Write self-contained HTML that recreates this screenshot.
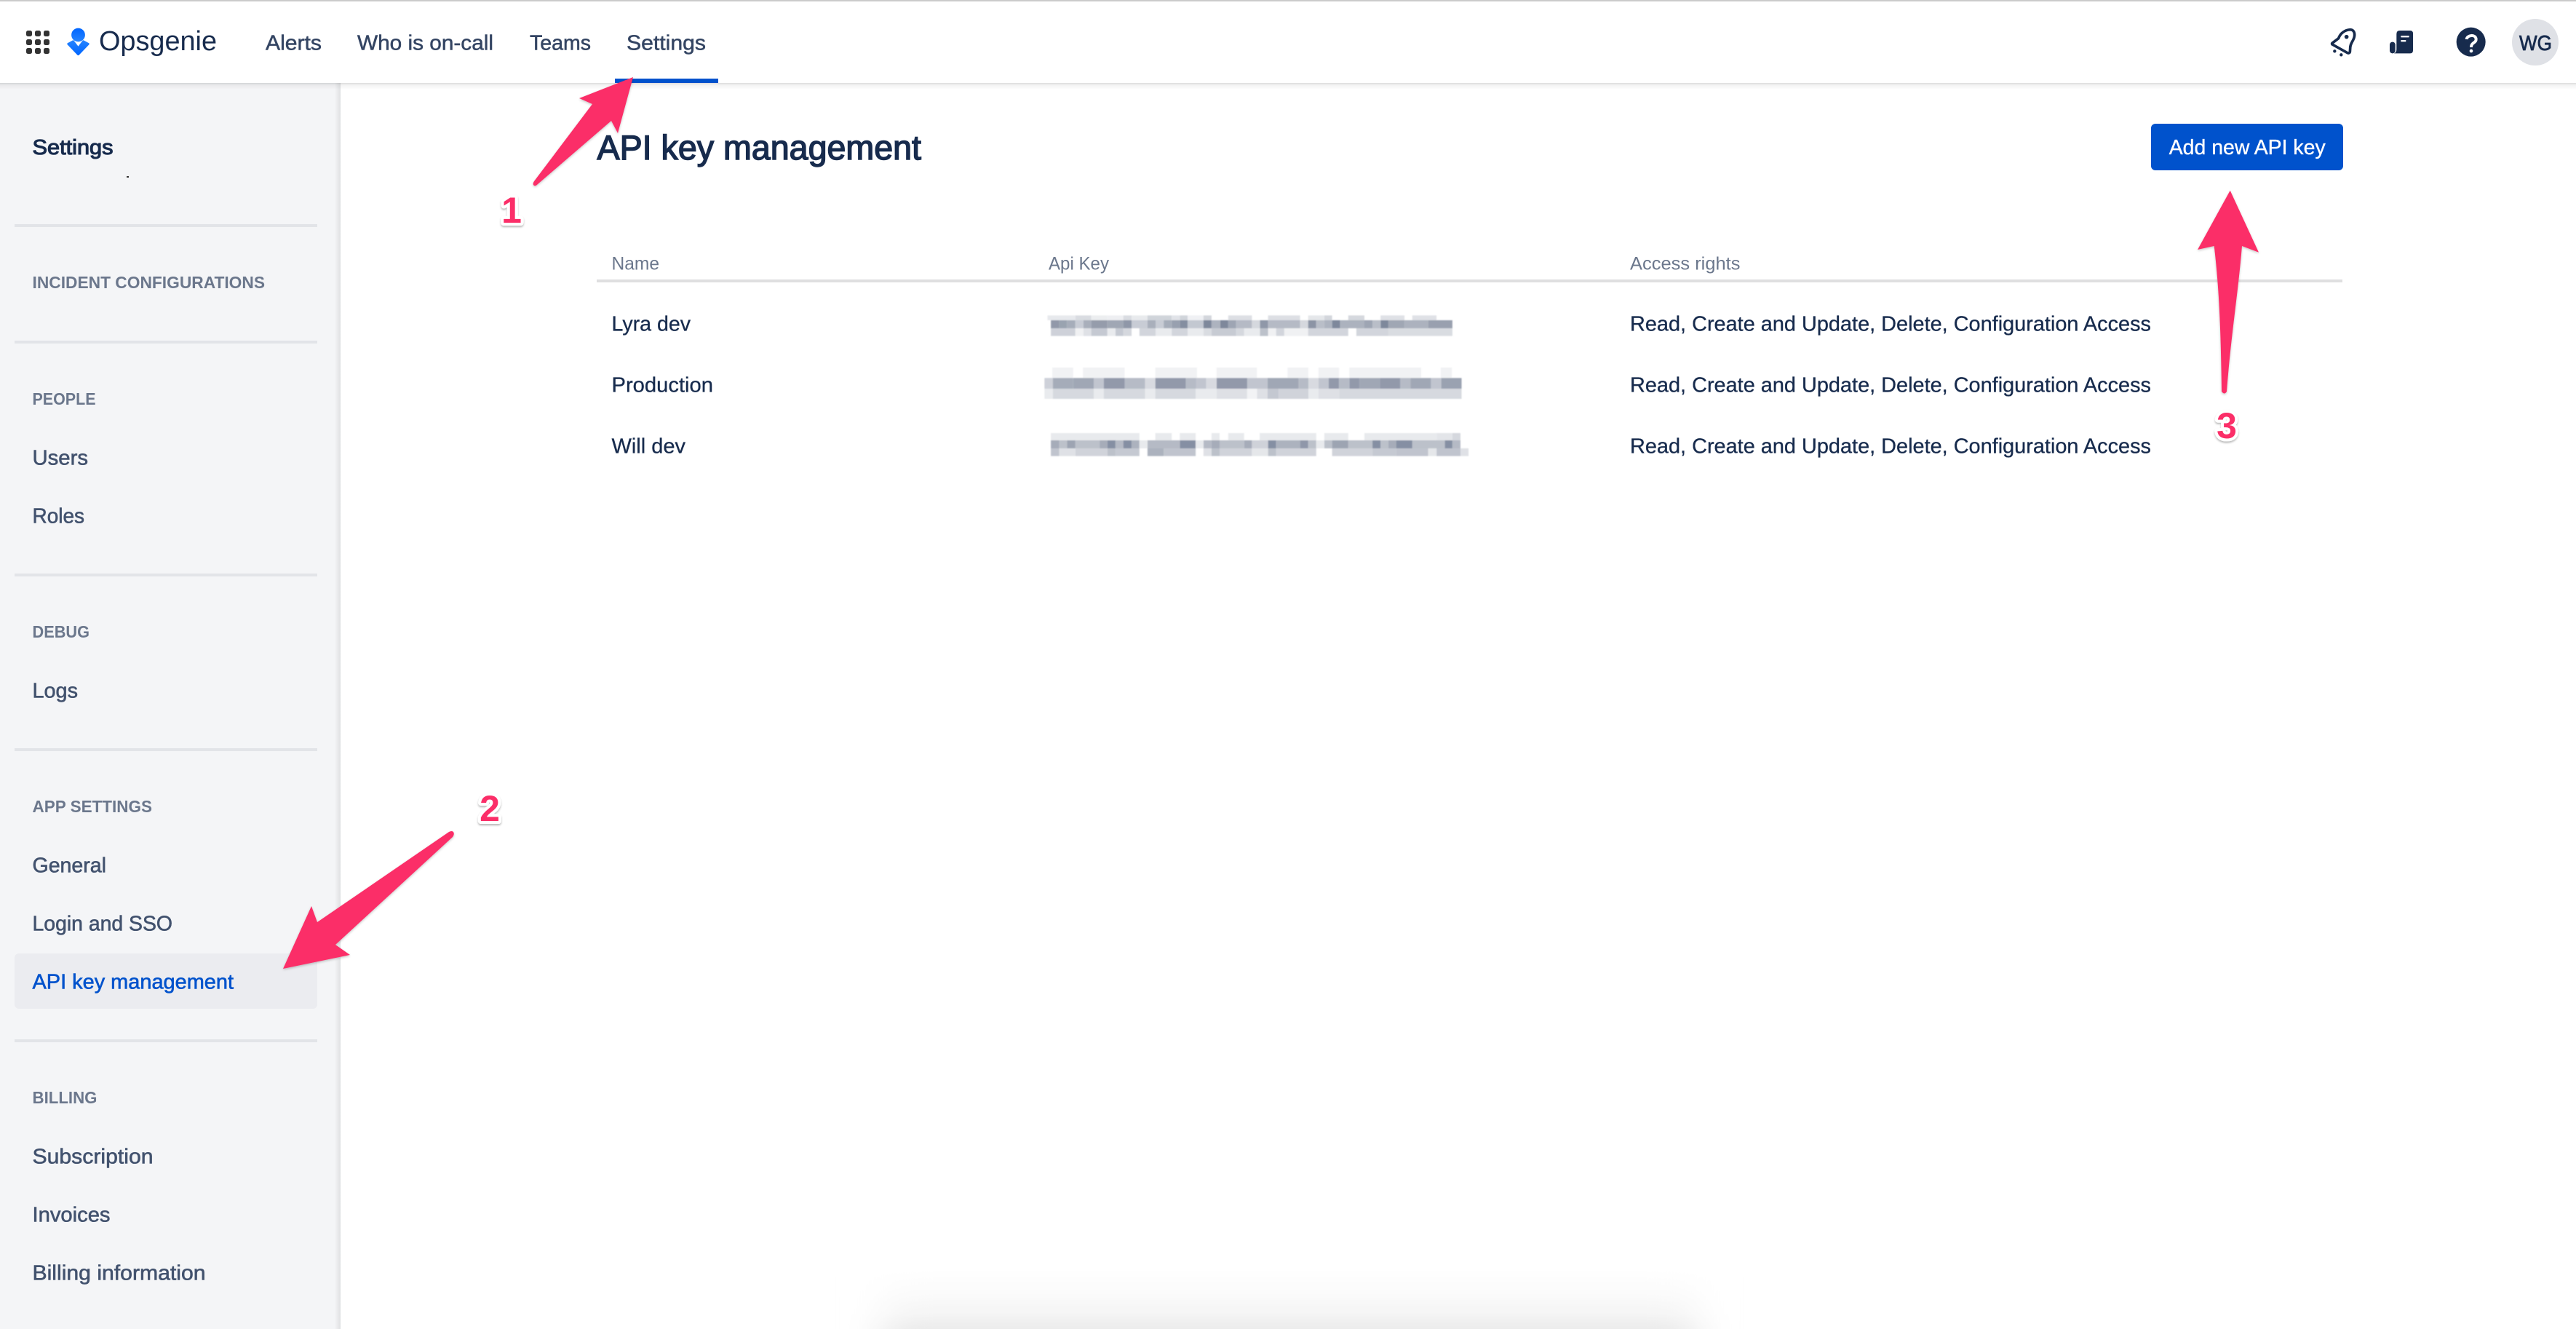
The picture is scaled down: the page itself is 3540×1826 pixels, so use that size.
<!DOCTYPE html>
<html lang="en">
<head>
<meta charset="utf-8">
<title>API key management</title>
<style>
html,body{margin:0;padding:0;width:3540px;height:1826px;overflow:hidden;background:#fff}
svg{display:block}
text{font-family:"Liberation Sans",Arial,sans-serif;white-space:pre}
.nav{font-size:29px;fill:#344563;stroke:#344563;stroke-width:.5}
.lab{font-size:23px;font-weight:bold;fill:#6b778c}
.it{font-size:29px;fill:#42526e;stroke:#42526e;stroke-width:.6}
.th{font-size:25px;fill:#6b778c}
.td{font-size:29px;fill:#172b4d;stroke:#172b4d;stroke-width:.3}
.num{font-size:50px;font-weight:bold;fill:#fb2f68;stroke:#fff;stroke-width:8px;paint-order:stroke;stroke-linejoin:round;filter:url(#ds)}
</style>
</head>
<body>
<svg xmlns="http://www.w3.org/2000/svg" width="3540" height="1826" viewBox="0 0 3540 1826">
<defs>
<filter id="hb" x="-10%" y="-10%" width="120%" height="120%"><feGaussianBlur stdDeviation="28 0"/></filter>
<filter id="mb" x="-2%" y="-10%" width="104%" height="120%"><feGaussianBlur stdDeviation="2.2"/></filter>
<filter id="ds" x="-30%" y="-30%" width="160%" height="160%"><feDropShadow dx="0" dy="2" stdDeviation="1.2" flood-color="#000" flood-opacity=".28"/></filter>
<filter id="as" x="-20%" y="-20%" width="140%" height="140%"><feDropShadow dx="0" dy="1.5" stdDeviation="1.5" flood-color="#000" flood-opacity=".22"/></filter>
<linearGradient id="bg" x1="0" y1="0" x2="0" y2="1"><stop offset="0" stop-color="#fff"/><stop offset=".3" stop-color="#fcfcfc"/><stop offset=".65" stop-color="#f5f5f5"/><stop offset="1" stop-color="#e5e5e5"/></linearGradient>
<linearGradient id="sh" x1="0" y1="0" x2="1" y2="0"><stop offset="0" stop-color="#f4f5f7"/><stop offset="1" stop-color="#dfe0e2"/></linearGradient>
<linearGradient id="hs" x1="0" y1="0" x2="0" y2="1"><stop offset="0" stop-color="#000" stop-opacity=".14"/><stop offset=".3" stop-color="#000" stop-opacity=".05"/><stop offset="1" stop-color="#000" stop-opacity="0"/></linearGradient>
<linearGradient id="lg" x1="0" y1="0" x2="0" y2="1"><stop offset="0" stop-color="#2684ff"/><stop offset="1" stop-color="#0065ff"/></linearGradient>
<linearGradient id="lc" x1="0" y1="0" x2="0" y2="1"><stop offset="0" stop-color="#0065ff"/><stop offset="1" stop-color="#2684ff"/></linearGradient>
</defs>

<!-- sidebar -->
<rect x="0" y="114" width="460" height="1712" fill="#f4f5f7"/>
<rect x="460" y="114" width="8" height="1712" fill="url(#sh)"/>

<!-- bottom shadow -->
<rect x="1215" y="1740" width="1115" height="100" fill="url(#bg)" filter="url(#hb)"/>

<!-- header -->
<rect x="0" y="0" width="3540" height="114" fill="#fff"/>
<rect x="0" y="0" width="3540" height="2" fill="#cbcbcb"/>
<rect x="0" y="114" width="3540" height="9" fill="url(#hs)"/>
<rect x="845" y="108" width="142" height="6" fill="#0052cc"/>

<!-- grid icon -->
<g fill="#333">
<rect x="36" y="42" width="8" height="8" rx="2.5"/><rect x="48" y="42" width="8" height="8" rx="2.5"/><rect x="60" y="42" width="8" height="8" rx="2.5"/>
<rect x="36" y="54" width="8" height="8" rx="2.5"/><rect x="48" y="54" width="8" height="8" rx="2.5"/><rect x="60" y="54" width="8" height="8" rx="2.5"/>
<rect x="36" y="66" width="8" height="8" rx="2.5"/><rect x="48" y="66" width="8" height="8" rx="2.5"/><rect x="60" y="66" width="8" height="8" rx="2.5"/>
</g>
<!-- logo -->
<circle cx="107.5" cy="48" r="9.4" fill="url(#lc)"/>
<path d="M92.6 59.4 L100 55.4 Q101 55 101.6 55.9 L107.5 63.6 L113.4 55.9 Q114 55 115 55.4 L122.4 59.4 Q123.2 60.2 122.4 61.2 L108.6 75.6 Q107.5 76.6 106.4 75.6 L92.6 61.2 Q91.8 60.2 92.6 59.4 Z" fill="url(#lg)"/>
<text x="136" y="69" font-size="38" fill="#172b4d" textLength="162" lengthAdjust="spacingAndGlyphs">Opsgenie</text>

<!-- nav -->
<text class="nav" x="365" y="68.5" textLength="77" lengthAdjust="spacingAndGlyphs">Alerts</text>
<text class="nav" x="491" y="68.5" textLength="187" lengthAdjust="spacingAndGlyphs">Who is on-call</text>
<text class="nav" x="728" y="68.5" textLength="84" lengthAdjust="spacingAndGlyphs">Teams</text>
<text class="nav" x="861" y="68.5" textLength="109" lengthAdjust="spacingAndGlyphs">Settings</text>

<!-- right icons -->
<g transform="translate(3180,20) scale(.33333)">
<path d="M76 117 L101 98 C108 78 126 63 150 62 C165 63 169 78 166 92 C162 110 148 120 149 140 L148 154 C146 160 140 160 136 157 L77 124 C73 122 73 119 76 117 Z" fill="none" stroke="#172b4d" stroke-width="11" stroke-linejoin="round"/>
<circle cx="134" cy="92" r="8.5" fill="#172b4d"/>
<circle cx="85" cy="151" r="6.5" fill="#172b4d"/>
<circle cx="112" cy="166" r="6.5" fill="#172b4d"/>
<path d="M340 80 Q340 66 354 66 H396 Q408 66 408 78 V148 Q408 160 396 160 H330 Q340 156 340 144 Z" fill="#172b4d"/>
<rect x="312" y="113" width="23" height="47" rx="11" fill="#172b4d"/>
<rect x="358" y="87" width="34" height="7" rx="2" fill="#fff"/>
<rect x="358" y="105" width="21" height="7" rx="2" fill="#fff"/>
<circle cx="647" cy="113" r="60" fill="#172b4d"/>
<path d="M629 102 C630 84 666 80 668 101 C669 118 648 114 648 135" fill="none" stroke="#fff" stroke-width="12"/>
<circle cx="648" cy="150" r="7" fill="#fff"/>
</g>
<circle cx="3484" cy="58" r="32" fill="#dfe1e6"/>
<text x="3462" y="69" font-size="29" fill="#172b4d" stroke="#172b4d" stroke-width=".8" textLength="45" lengthAdjust="spacingAndGlyphs">WG</text>

<!-- sidebar content -->
<text x="44.5" y="212" font-size="29" fill="#172b4d" stroke="#172b4d" stroke-width="1.1" textLength="111" lengthAdjust="spacingAndGlyphs">Settings</text>
<rect x="174" y="242" width="3" height="2" fill="#333"/>
<g fill="#e2e4e8">
<rect x="20" y="308" width="416" height="4"/>
<rect x="20" y="468" width="416" height="4"/>
<rect x="20" y="788" width="416" height="4"/>
<rect x="20" y="1028" width="416" height="4"/>
<rect x="20" y="1428" width="416" height="4"/>
</g>
<text class="lab" x="44.5" y="396" textLength="319.5" lengthAdjust="spacingAndGlyphs">INCIDENT CONFIGURATIONS</text>
<text class="lab" x="44.5" y="556" textLength="87" lengthAdjust="spacingAndGlyphs">PEOPLE</text>
<text class="it" x="44.5" y="638.7" textLength="76.5" lengthAdjust="spacingAndGlyphs">Users</text>
<text class="it" x="44.5" y="718.7" textLength="71.5" lengthAdjust="spacingAndGlyphs">Roles</text>
<text class="lab" x="44.5" y="876" textLength="78.5" lengthAdjust="spacingAndGlyphs">DEBUG</text>
<text class="it" x="44.5" y="958.7" textLength="62.5" lengthAdjust="spacingAndGlyphs">Logs</text>
<text class="lab" x="44.5" y="1116" textLength="164.5" lengthAdjust="spacingAndGlyphs">APP SETTINGS</text>
<text class="it" x="44.5" y="1198.7" textLength="101.5" lengthAdjust="spacingAndGlyphs">General</text>
<text class="it" x="44.5" y="1278.7" textLength="192.5" lengthAdjust="spacingAndGlyphs">Login and SSO</text>
<rect x="20" y="1310" width="416" height="76" rx="6" fill="#ebecf0"/>
<text x="44.5" y="1358.7" font-size="29" fill="#0052cc" stroke="#0052cc" stroke-width=".6" textLength="276.5" lengthAdjust="spacingAndGlyphs">API key management</text>
<text class="lab" x="44.5" y="1516" textLength="89" lengthAdjust="spacingAndGlyphs">BILLING</text>
<text class="it" x="44.5" y="1598.7" textLength="166" lengthAdjust="spacingAndGlyphs">Subscription</text>
<text class="it" x="44.5" y="1678.7" textLength="107" lengthAdjust="spacingAndGlyphs">Invoices</text>
<text class="it" x="44.5" y="1758.7" textLength="238" lengthAdjust="spacingAndGlyphs">Billing information</text>

<!-- main -->
<text x="820.5" y="219" font-size="47" fill="#172b4d" stroke="#172b4d" stroke-width="1.5" textLength="445.5" lengthAdjust="spacingAndGlyphs">API key management</text>
<rect x="2956" y="170" width="264" height="64" rx="6" fill="#0052cc"/>
<text x="2980.7" y="212" font-size="29" fill="#fff" stroke="#fff" stroke-width=".35" textLength="215" lengthAdjust="spacingAndGlyphs">Add new API key</text>

<text class="th" x="840.5" y="370.7" textLength="65.5" lengthAdjust="spacingAndGlyphs">Name</text>
<text class="th" x="1441" y="370.7" textLength="83" lengthAdjust="spacingAndGlyphs">Api Key</text>
<text class="th" x="2240" y="370.7" textLength="151.5" lengthAdjust="spacingAndGlyphs">Access rights</text>
<rect x="820" y="384" width="2399" height="4" fill="#dfdfe0"/>

<text class="td" x="840.5" y="454.5" textLength="108.5" lengthAdjust="spacingAndGlyphs">Lyra dev</text>
<text class="td" x="840.5" y="538.5" textLength="139.5" lengthAdjust="spacingAndGlyphs">Production</text>
<text class="td" x="840.5" y="622.5" textLength="101.5" lengthAdjust="spacingAndGlyphs">Will dev</text>
<text class="td" x="2240" y="454.5" textLength="716" lengthAdjust="spacingAndGlyphs">Read, Create and Update, Delete, Configuration Access</text>
<text class="td" x="2240" y="538.5" textLength="716" lengthAdjust="spacingAndGlyphs">Read, Create and Update, Delete, Configuration Access</text>
<text class="td" x="2240" y="622.5" textLength="716" lengthAdjust="spacingAndGlyphs">Read, Create and Update, Delete, Configuration Access</text>

<!-- pixelated keys -->
<g transform="translate(1425,425) scale(.38265,.33333)" filter="url(#mb)">
<path fill="#e7e9ed" d="M38 25H138V45H38z"/><path fill="#d9dce1" d="M138 25H195V45H138zM310 25H340V45H310z"/><path fill="#eceef0" d="M195 25H253V45H195z"/><path fill="#eeeff2" d="M253 25H310V45H253z"/><path fill="#e8eaed" d="M340 25H397V45H340z"/><path fill="#d0d4da" d="M397 25H484V45H397zM513 25H541V45H513z"/><path fill="#e1e3e8" d="M484 25H513V45H484z"/><path fill="#f0f1f4" d="M541 25H598V45H541z"/><path fill="#d3d6dc" d="M598 25H627V45H598zM1032 25H1060V45H1032z"/><path fill="#dddfe4" d="M687 25H772V45H687zM830 25H945V45H830z"/><path fill="#e5e7ea" d="M974 25H1032V45H974z"/><path fill="#d5d8de" d="M1118 25H1176V45H1118z"/><path fill="#dfe1e6" d="M1234 25H1320V45H1234zM1348 25H1435V45H1348z"/>
<path fill="#9198a9" d="M50 45H80V78H50z"/><path fill="#99a3b0" d="M80 45H108V78H80z"/><path fill="#a6adba" d="M108 45H138V78H108zM455 45H484V78H455z"/><path fill="#c8ccd5" d="M138 45H167V78H138zM340 45H397V78H340zM426 45H455V78H426z"/><path fill="#a9afbb" d="M167 45H195V78H167zM397 45H426V78H397z"/><path fill="#959cab" d="M195 45H253V78H195z"/><path fill="#a0a7b4" d="M253 45H310V78H253zM1262 45H1320V78H1262z"/><path fill="#8f97a8" d="M310 45H340V78H310zM801 45H830V78H801z"/><path fill="#98a0af" d="M484 45H513V78H484z"/><path fill="#848ea0" d="M513 45H541V78H513z"/><path fill="#c3c8d1" d="M541 45H598V78H541z"/><path fill="#7e889b" d="M598 45H627V78H598zM658 45H687V78H658zM1060 45H1089V78H1060zM1234 45H1262V78H1234z"/><path fill="#adb3bf" d="M627 45H658V78H627zM1032 45H1060V78H1032z"/><path fill="#9ea5b3" d="M687 45H715V78H687zM1176 45H1205V78H1176z"/><path fill="#b5bac5" d="M715 45H772V78H715zM830 45H945V78H830z"/><path fill="#d5d8de" d="M772 45H801V78H772zM945 45H974V78H945z"/><path fill="#8c94a5" d="M974 45H1003V78H974z"/><path fill="#b9bec8" d="M1003 45H1032V78H1003zM1205 45H1234V78H1205z"/><path fill="#acb2be" d="M1089 45H1176V78H1089zM1320 45H1405V78H1320z"/><path fill="#99a0af" d="M1405 45H1492V78H1405z"/>
<path fill="#ced1d9" d="M50 78H138V110H50z"/><path fill="#f0f1f3" d="M138 78H167V110H138zM830 78H859V110H830zM888 78H974V110H888z"/><path fill="#dfe1e6" d="M167 78H195V110H167z"/><path fill="#c5c9d2" d="M195 78H253V110H195zM282 78H310V110H282z"/><path fill="#e9ebee" d="M253 78H282V110H253zM426 78H484V110H426zM541 78H598V110H541zM744 78H801V110H744z"/><path fill="#d5d8de" d="M310 78H340V110H310zM715 78H744V110H715z"/><path fill="#d2d5dc" d="M368 78H426V110H368zM484 78H541V110H484zM859 78H888V110H859zM974 78H1118V110H974zM1147 78H1262V110H1147z"/><path fill="#d9dce1" d="M598 78H627V110H598zM1262 78H1492V110H1262z"/><path fill="#c7cbd3" d="M627 78H715V110H627z"/><path fill="#bcc1ca" d="M801 78H830V110H801z"/>

<path fill="#f1f2f4" d="M55 240H130V283H55zM165 240H315V283H165zM425 240H575V283H425zM645 240H790V283H645zM900 240H975V283H900zM1011 240H1085V283H1011zM1122 240H1380V283H1122zM1450 240H1490V283H1450z"/>
<path fill="#ced1d9" d="M27 283H57V327H27z"/><path fill="#a5acb9" d="M57 283H130V327H57z"/><path fill="#a0a7b5" d="M130 283H204V327H130zM828 283H940V327H828zM1158 283H1232V327H1158zM1342 283H1415V327H1342z"/><path fill="#c1c5cf" d="M204 283H240V327H204zM572 283H608V327H572zM755 283H828V327H755zM1011 283H1048V327H1011zM1415 283H1452V327H1415z"/><path fill="#9299aa" d="M240 283H315V327H240zM425 283H535V327H425zM645 283H755V327H645zM1048 283H1085V327H1048zM1122 283H1158V327H1122zM1232 283H1305V327H1232z"/><path fill="#b6bbc6" d="M315 283H388V327H315zM535 283H572V327H535zM940 283H975V327H940zM1085 283H1122V327H1085zM1305 283H1342V327H1305z"/><path fill="#d8dae0" d="M388 283H425V327H388zM608 283H645V327H608zM975 283H1011V327H975z"/><path fill="#9aa2b1" d="M1452 283H1525V327H1452z"/>
<path fill="#e9ebee" d="M27 327H57V369H27zM204 327H240V369H204zM388 327H425V369H388zM570 327H645V369H570zM975 327H1011V369H975z"/><path fill="#d6d9df" d="M57 327H204V369H57zM240 327H388V369H240zM425 327H570V369H425zM1085 327H1525V369H1085z"/><path fill="#dee0e5" d="M645 327H755V369H645zM790 327H828V369H790zM1011 327H1085V369H1011z"/><path fill="#f2f3f5" d="M755 327H790V369H755z"/><path fill="#c4c8d1" d="M828 327H868V369H828z"/><path fill="#d0d3da" d="M868 327H975V369H868z"/>

<path fill="#e8eaed" d="M50 510H368V540H50zM425 510H484V540H425zM513 510H570V540H513zM627 510H656V540H627zM687 510H744V540H687zM800 510H1003V540H800zM1032 510H1118V540H1032zM1176 510H1435V540H1176z"/><path fill="#e3e5e9" d="M1435 510H1492V540H1435z"/><path fill="#d5d8de" d="M1492 510H1521V540H1492z"/>
<path fill="#a6acb9" d="M50 540H80V573H50zM225 540H253V573H225zM627 540H656V573H627zM744 540H772V573H744zM1262 540H1290V573H1262z"/><path fill="#bcc1ca" d="M80 540H108V573H80zM138 540H225V573H138zM656 540H744V573H656zM974 540H1003V573H974zM1032 540H1060V573H1032zM1118 540H1205V573H1118zM1234 540H1262V573H1234zM1348 540H1465V573H1348z"/><path fill="#9da4b2" d="M108 540H138V573H108zM1060 540H1118V573H1060z"/><path fill="#858fa3" d="M253 540H282V573H253zM310 540H340V573H310zM513 540H570V573H513zM830 540H859V573H830zM1205 540H1234V573H1205zM1290 540H1348V573H1290zM1465 540H1492V573H1465z"/><path fill="#b5bac5" d="M282 540H310V573H282zM397 540H513V573H397zM598 540H627V573H598zM1492 540H1521V573H1492z"/><path fill="#acb2be" d="M340 540H368V573H340zM859 540H945V573H859z"/><path fill="#e8eaed" d="M368 540H397V573H368zM570 540H598V573H570zM1003 540H1032V573H1003z"/><path fill="#cfd2d9" d="M772 540H830V573H772z"/><path fill="#8f97a9" d="M945 540H974V573H945z"/>
<path fill="#c0c4ce" d="M50 573H80V605H50zM455 573H570V605H455zM1290 573H1405V605H1290zM1435 573H1521V605H1435z"/><path fill="#dfe1e6" d="M80 573H138V605H80zM598 573H627V605H598zM1521 573H1550V605H1521z"/><path fill="#d0d3da" d="M138 573H253V605H138zM656 573H772V605H656zM859 573H1003V605H859zM1060 573H1205V605H1060z"/><path fill="#bcc1ca" d="M253 573H282V605H253zM627 573H656V605H627zM830 573H859V605H830z"/><path fill="#c5c9d2" d="M282 573H368V605H282zM1205 573H1290V605H1205z"/><path fill="#acb2be" d="M397 573H455V605H397z"/><path fill="#e5e7ea" d="M772 573H830V605H772zM1405 573H1435V605H1405z"/>
</g>

<!-- arrows -->
<g fill="#fb2f68" filter="url(#as)">
<path d="M870 106 L849 183 L840 166 L739 253 Q735 257 733 254 Q732 252 734 249 L814 143 L796 135 Z"/>
<path d="M389 1331 L428 1245 L436 1267 L617 1143 Q621 1141 623 1143 Q625 1146 622 1150 L461 1298 L481 1312 Z"/>
<path d="M3064.7 261.7 L3104 346.7 L3081 338 C3076 400 3066 460 3060 538 Q3057 543 3053 538 C3052 460 3050 400 3042.7 338 L3020 343 Z"/>
</g>
<text class="num" x="703" y="306" text-anchor="middle">1</text>
<text class="num" x="673" y="1128" text-anchor="middle">2</text>
<text class="num" x="3060" y="602" text-anchor="middle">3</text>
</svg>
</body>
</html>
